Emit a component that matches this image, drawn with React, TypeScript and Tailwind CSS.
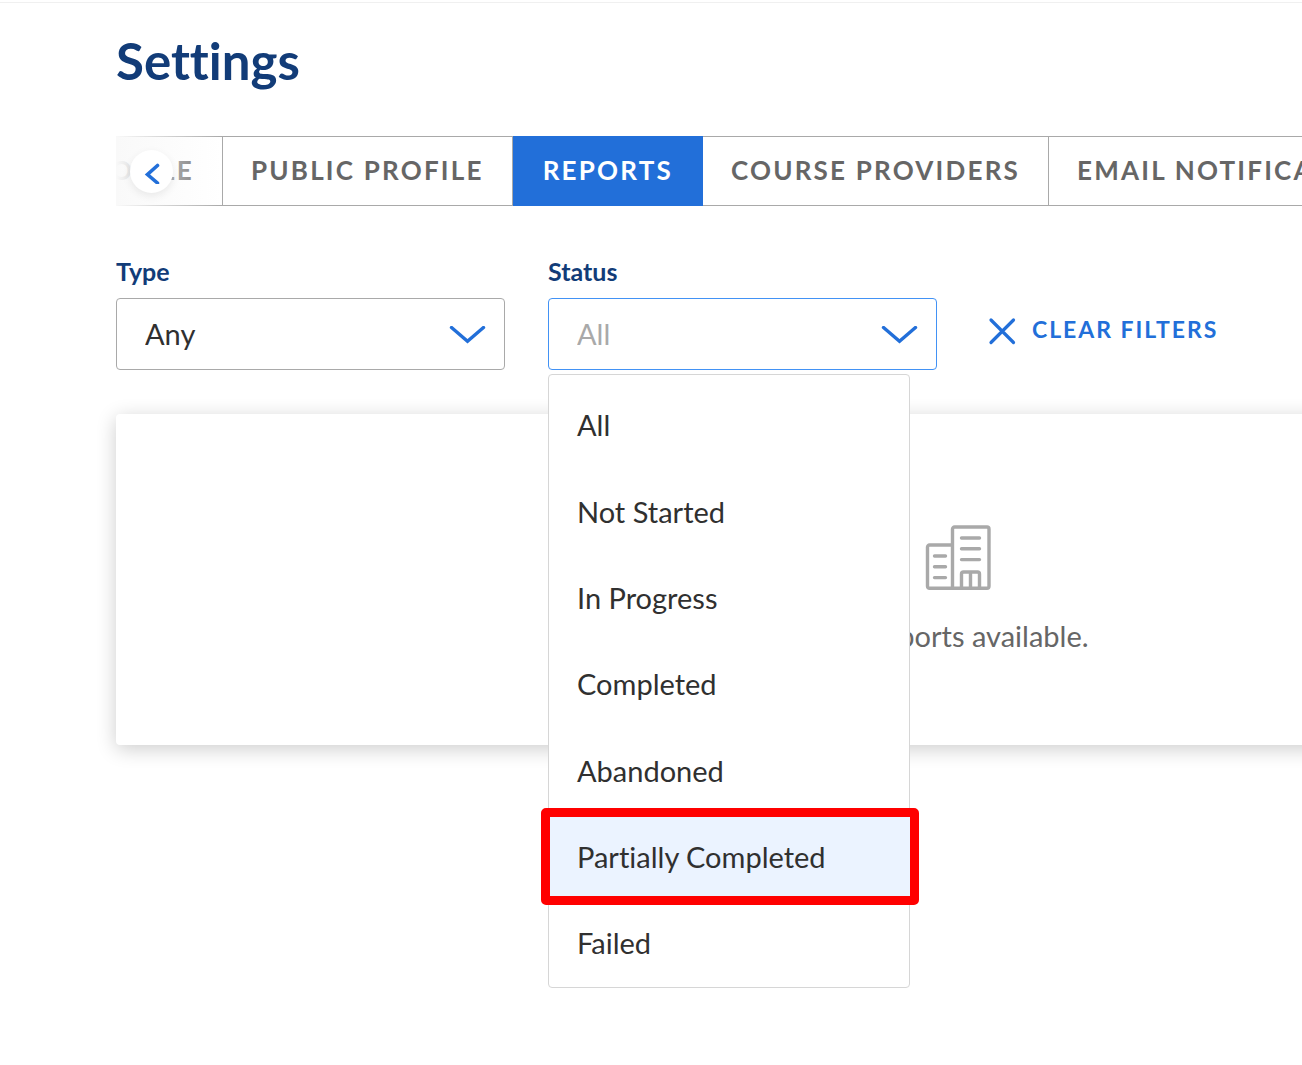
import { useState } from "react";

const tabs = [
  { label: "Profile", clipped: true },
  { label: "Public Profile" },
  { label: "Reports", active: true },
  { label: "Course Providers" },
  { label: "Email Notifications" },
];

const statuses = [
  "All",
  "Not Started",
  "In Progress",
  "Completed",
  "Abandoned",
  "Partially Completed",
  "Failed",
];

function Chevron() {
  return (
    <svg
      className="pointer-events-none absolute top-7 right-4 h-5 w-10"
      viewBox="0 0 40 20"
      fill="none"
      stroke="#226fd9"
      strokeWidth="3.4"
      strokeLinecap="round"
      aria-hidden="true"
    >
      <path d="M2.5 1.5L18.5 15.3L34.5 1.5" />
    </svg>
  );
}

function Buildings() {
  return (
    <svg
      className="h-[66px] w-[66px]"
      viewBox="0 0 66 66"
      fill="none"
      stroke="#a9a9a9"
      strokeWidth="3.4"
      strokeLinecap="round"
      strokeLinejoin="round"
      aria-hidden="true"
    >
      <path d="M27.5 63.3V4a2 2 0 0 1 2-2H62a2 2 0 0 1 2 2V61.3a2 2 0 0 1-2 2H4.5a2 2 0 0 1-2-2V22a2 2 0 0 1 2-2H27" />
      <path d="M36.5 13H54.5M36.5 23.8H54.5M36.5 34.6H54.5M9.5 31H20.5M9.5 41.8H20.5M9.5 52.6H20.5" />
      <path d="M36.5 63V49a2 2 0 0 1 2-2H52.5a2 2 0 0 1 2 2V63M45.5 47V63" />
    </svg>
  );
}

export default function App() {
  const [type, setType] = useState("Any");
  const [status, setStatus] = useState("All");

  return (
    <div className="min-h-screen overflow-hidden bg-white pt-0.5 font-['Lato',sans-serif] text-[#303030] [font-variant-ligatures:none]">
      <main className="border-t border-[#f0f0f0] pb-80 pl-[116px]">
        <h1 className="pt-[26px] text-[51px] leading-[64px] font-bold text-[#123c78]">Settings</h1>

        <nav className="relative mt-[43px] flex h-[70px] overflow-hidden" aria-label="Settings sections">
          {tabs.map((tab) => (
            <a
              key={tab.label}
              href="#"
              className={
                tab.clipped
                  ? "flex w-[107px] shrink-0 items-center justify-end overflow-hidden border-y border-r border-[#a9a9a9] pr-7 pb-0.5 text-[26px] font-bold tracking-[0.085em] whitespace-nowrap text-[#666] uppercase"
                  : tab.active
                    ? "flex shrink-0 items-center bg-[#226fd9] px-[30px] pb-0.5 text-[26px] font-bold tracking-[0.085em] whitespace-nowrap text-white uppercase"
                    : "flex shrink-0 items-center border-y border-r border-[#a9a9a9] px-7 pb-0.5 text-[26px] font-bold tracking-[0.085em] whitespace-nowrap text-[#666] uppercase"
              }
            >
              {tab.label}
            </a>
          ))}
          <div className="pointer-events-none absolute inset-y-0 left-0 w-[106px] bg-linear-to-r from-[#f9f9f9] to-[#f9f9f9]/0" />
          <button
            type="button"
            aria-label="Previous tabs"
            className="absolute top-3.5 left-3.5 flex size-[43px] items-center justify-center rounded-full bg-white shadow-[0_3px_8px_rgba(0,0,0,0.08)]"
          >
            <svg className="size-6" viewBox="0 0 24 24" fill="none" stroke="#226fd9" strokeWidth="3.6" strokeLinecap="round" aria-hidden="true">
              <path d="M17.5 5.5L7.5 14.5L17.5 23" />
            </svg>
          </button>
        </nav>

        <div className="mt-[49px] flex items-start gap-[43px]">
          <div className="w-[389px]">
            <label htmlFor="type" className="block text-[25px] leading-8 font-bold text-[#123c78]">
              Type
            </label>
            <div className="relative mt-[11px]">
              <select
                id="type"
                value={type}
                onChange={(e) => setType(e.target.value)}
                className="h-[72px] w-full appearance-none rounded border border-[#a9a9a9] bg-white px-7 text-[29px]"
              >
                <option>Any</option>
              </select>
              <Chevron />
            </div>
          </div>

          <div className="w-[389px]">
            <label htmlFor="status" className="block text-[25px] leading-8 font-bold text-[#123c78]">
              Status
            </label>
            <div className="relative mt-[11px]">
              <select
                id="status"
                value={status}
                onChange={(e) => setStatus(e.target.value)}
                className="h-[72px] w-full appearance-none rounded border border-[#4292f5] bg-white px-7 text-[29px] text-[#a9a9a9]"
              >
                {statuses.map((s) => (
                  <option key={s}>{s}</option>
                ))}
              </select>
              <Chevron />
              <ul
                role="listbox"
                aria-label="Status"
                className="absolute top-[76px] left-0 z-10 flex h-[614px] w-[362px] flex-col rounded border border-[#d6d6d6] bg-white pt-[7px] pb-px text-[29px]"
              >
                {statuses.map((s) => (
                  <li
                    key={s}
                    role="option"
                    aria-selected={s === "Partially Completed"}
                    onClick={() => setStatus(s)}
                    className="relative flex flex-1 items-center px-7"
                  >
                    {s === "Partially Completed" && (
                      <span className="absolute -inset-y-[5px] -right-2.5 -left-2 rounded-[5px] border-[9px] border-[#ff0000] bg-[#ebf3ff]" />
                    )}
                    <span className="relative">{s}</span>
                  </li>
                ))}
              </ul>
            </div>
          </div>

          <button
            type="button"
            onClick={() => {
              setType("Any");
              setStatus("All");
            }}
            className="mt-[58px] ml-2 flex h-8 items-center gap-4 text-[23px] font-bold tracking-[0.085em] whitespace-nowrap text-[#226fd9] uppercase"
          >
            <svg className="mt-1 size-7" viewBox="0 0 28 28" fill="none" stroke="currentColor" strokeWidth="3.2" strokeLinecap="round" aria-hidden="true">
              <path d="M3 3L25.5 25.5M25.5 3L3 25.5" />
            </svg>
            Clear Filters
          </button>
        </div>

        <section className="mt-11 -mr-[498px] flex h-[331px] flex-col items-center rounded bg-white pt-[111px] shadow-[0_4px_20px_rgba(0,0,0,0.2)]">
          <Buildings />
          <p className="mt-[25px] text-[29px] leading-10 text-[#666]">No reports available.</p>
        </section>
      </main>
    </div>
  );
}
